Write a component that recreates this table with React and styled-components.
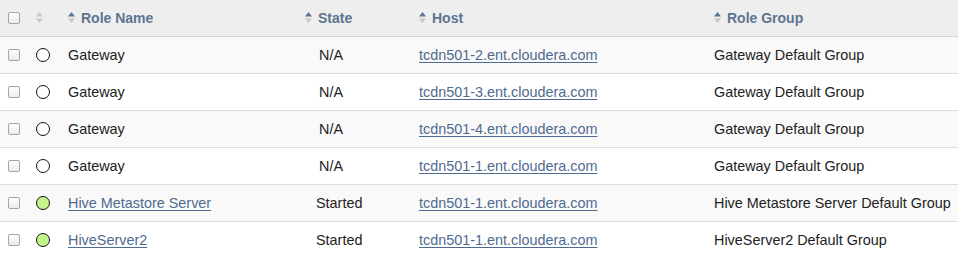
import styled, { createGlobalStyle } from "styled-components";

const GlobalStyle = createGlobalStyle`
  body{
    margin:0;
    background:#fff;
    font-family:"Liberation Sans", Arial, sans-serif;
  }
`;

const roles = [
  { name: "Gateway", state: "N/A", host: "tcdn501-2.ent.cloudera.com", group: "Gateway Default Group", status: "none" },
  { name: "Gateway", state: "N/A", host: "tcdn501-3.ent.cloudera.com", group: "Gateway Default Group", status: "none" },
  { name: "Gateway", state: "N/A", host: "tcdn501-4.ent.cloudera.com", group: "Gateway Default Group", status: "none" },
  { name: "Gateway", state: "N/A", host: "tcdn501-1.ent.cloudera.com", group: "Gateway Default Group", status: "none" },
  { name: "Hive Metastore Server", state: "Started", host: "tcdn501-1.ent.cloudera.com", group: "Hive Metastore Server Default Group", status: "good", link: true },
  { name: "HiveServer2", state: "Started", host: "tcdn501-1.ent.cloudera.com", group: "HiveServer2 Default Group", status: "good", link: true },
];

const Table = styled.table`
  width:958px;
  border-collapse:collapse;
  table-layout:fixed;
  font-size:14.4px;
  color:#222;
`;

const HeadRow = styled.tr`
  background:#eeeeee;
  border-bottom:1px solid #d6d6d6;
`;

const Th = styled.th`
  height:36px;
  padding:0 0 0 8px;
  text-align:left;
  font-size:14px;
  font-weight:bold;
  color:#5d7490;
  white-space:nowrap;
  vertical-align:middle;
`;

const Row = styled.tr`
  background:${p => (p.$odd ? "#f9f9f9" : "#ffffff")};
  border-bottom:1px solid #dddddd;
`;

const Td = styled.td`
  height:36px;
  padding:0 0 0 ${p => p.$pad || 8}px;
  white-space:nowrap;
  vertical-align:middle;
`;

const Check = styled.span`
  display:block;
  width:10px;
  height:10px;
  border:1px solid #a4a4a4;
  border-radius:2px;
  background:linear-gradient(#ffffff, #ebebeb);
`;

const Status = styled.span`
  display:block;
  box-sizing:border-box;
  width:14px;
  height:14px;
  border:1.3px solid #111;
  border-radius:50%;
  background:${p => (p.$good ? "#c4f48a" : "#fff")};
`;

const Link = styled.a`
  color:#4f6b8f;
  text-decoration:underline;
  text-underline-offset:2px;
  text-decoration-thickness:1px;
`;

const SortWrap = styled.span`
  display:inline-flex;
  align-items:center;
  gap:6px;
`;

function SortIcon({ active }) {
  return (
    <svg width="7" height="11" viewBox="0 0 7 11" style={{ display: "block" }}>
      <polygon points="3.5,0 7,4.5 0,4.5" fill={active ? "#5d7490" : "#c8c8c8"} />
      <polygon points="0,6.5 7,6.5 3.5,11" fill="#c8c8c8" />
    </svg>
  );
}

function SortHead({ children, active = true }) {
  return (
    <SortWrap>
      <SortIcon active={active} />
      {children}
    </SortWrap>
  );
}

export default function App() {
  return (
    <>
      <GlobalStyle />
      <Table>
        <colgroup>
          <col style={{ width: 28 }} />
          <col style={{ width: 32 }} />
          <col style={{ width: 237 }} />
          <col style={{ width: 114 }} />
          <col style={{ width: 295 }} />
          <col style={{ width: 252 }} />
        </colgroup>
        <thead>
          <HeadRow>
            <Th><Check /></Th>
            <Th><SortHead active={false} /></Th>
            <Th><SortHead>Role Name</SortHead></Th>
            <Th><SortHead>State</SortHead></Th>
            <Th><SortHead>Host</SortHead></Th>
            <Th><SortHead>Role Group</SortHead></Th>
          </HeadRow>
        </thead>
        <tbody>
          {roles.map((r, i) => (
            <Row key={i} $odd={i % 2 === 0}>
              <Td><Check /></Td>
              <Td><Status $good={r.status === "good"} /></Td>
              <Td>{r.link ? <Link href="#">{r.name}</Link> : r.name}</Td>
              <Td $pad={r.state === "N/A" ? 22 : 19}>{r.state}</Td>
              <Td><Link href="#">{r.host}</Link></Td>
              <Td>{r.group}</Td>
            </Row>
          ))}
        </tbody>
      </Table>
    </>
  );
}
